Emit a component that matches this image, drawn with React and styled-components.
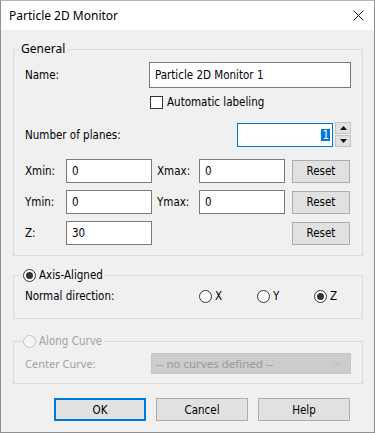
import React from 'react';
import styled, { createGlobalStyle, css } from 'styled-components';

const GlobalStyle = createGlobalStyle`
  html, body {
    margin: 0;
    padding: 0;
    background: #f0f0f0;
  }

  body {
    font-family: 'DejaVu Sans Condensed', 'DejaVu Sans', sans-serif;
    font-stretch: condensed;
    font-size: 11.5px;
    color: #000;
  }
`;

export default function App() {
  return (
    <>
      <GlobalStyle />
      <Window>
        <TitleBar>
          <Title>Particle 2D Monitor</Title>
          <CloseIcon viewBox="0 0 11 11">
            <path d="M0.5 0.5 L10.5 10.5 M10.5 0.5 L0.5 10.5" />
          </CloseIcon>
        </TitleBar>

        <Body>
          <Group>
            <Legend>General</Legend>
            <GroupContent $pad="5px 11px 10px">
              <NameRow>
                <Label>Name:</Label>
                <TextInput $height={26}>Particle 2D Monitor 1</TextInput>
              </NameRow>

              <CheckRow>
                <Checkbox />
                <span>Automatic labeling</span>
              </CheckRow>

              <PlanesRow>
                <Label>Number of planes:</Label>
                <Spin>
                  <SpinInput>
                    <Selected>1</Selected>
                  </SpinInput>
                  <SpinButtons>
                    <SpinButton>
                      <Arrow viewBox="0 0 7 4">
                        <path d="M3.5 0 L7 4 L0 4 Z" />
                      </Arrow>
                    </SpinButton>
                    <SpinButton>
                      <Arrow viewBox="0 0 7 4">
                        <path d="M0 0 L7 0 L3.5 4 Z" />
                      </Arrow>
                    </SpinButton>
                  </SpinButtons>
                </Spin>
              </PlanesRow>

              <Coords>
                <Label>Xmin:</Label>
                <TextInput>0</TextInput>
                <SideLabel>Xmax:</SideLabel>
                <TextInput>0</TextInput>
                <ResetButton>Reset</ResetButton>

                <Label>Ymin:</Label>
                <TextInput>0</TextInput>
                <SideLabel>Ymax:</SideLabel>
                <TextInput>0</TextInput>
                <ResetButton>Reset</ResetButton>

                <Label>Z:</Label>
                <TextInput>30</TextInput>
                <span />
                <span />
                <ResetButton>Reset</ResetButton>
              </Coords>
            </GroupContent>
          </Group>

          <Group $top={11}>
            <RadioLegend>
              <Radio $checked />
              <span>Axis-Aligned</span>
            </RadioLegend>
            <GroupContent $pad="5px 11px 14px">
              <DirectionRow>
                <Label>Normal direction:</Label>
                <RadioOption>
                  <Radio />
                  <span>X</span>
                </RadioOption>
                <RadioOption>
                  <Radio />
                  <span>Y</span>
                </RadioOption>
                <RadioOption>
                  <Radio $checked />
                  <span>Z</span>
                </RadioOption>
              </DirectionRow>
            </GroupContent>
          </Group>

          <Group $top={14}>
            <RadioLegend $disabled>
              <Radio $disabled />
              <span>Along Curve</span>
            </RadioLegend>
            <GroupContent $pad="4px 11px 9px">
              <CurveRow>
                <DisabledLabel>Center Curve:</DisabledLabel>
                <Select>
                  <span>-- no curves defined --</span>
                  <Chevron viewBox="0 0 10 6">
                    <path d="M0.5 0.5 L5 5 L9.5 0.5" />
                  </Chevron>
                </Select>
              </CurveRow>
            </GroupContent>
          </Group>

          <Actions>
            <Button $default>OK</Button>
            <Button>Cancel</Button>
            <Button>Help</Button>
          </Actions>
        </Body>
      </Window>
    </>
  );
}

const Window = styled.div`
  width: 375px;
  height: 433px;
  box-sizing: border-box;
  border: 1px solid #8f8f8f;
  border-top-color: #b5b5b5;
  display: flex;
  flex-direction: column;
  background: #f0f0f0;
`;

const TitleBar = styled.div`
  height: 29px;
  flex: none;
  display: flex;
  align-items: center;
  justify-content: space-between;
  padding: 0 10px 0 8px;
  background: #fff;
`;

const Title = styled.span`
  font-family: 'Noto Sans', sans-serif;
  font-stretch: normal;
  font-size: 12px;
  color: #000;
`;

const CloseIcon = styled.svg`
  width: 11px;
  height: 11px;
  stroke: #111;
  stroke-width: 1;
  fill: none;
`;

const Body = styled.div`
  flex: 1;
  display: flex;
  flex-direction: column;
  padding: 11px 11px 0 12px;
`;

const Group = styled.fieldset`
  margin: ${(p) => p.$top || 0}px 0 0;
  padding: 0;
  min-width: 0;
  border: 1px solid #dcdcdc;
`;

const Legend = styled.legend`
  margin-left: 5px;
  padding: 0 2px;
  line-height: 16px;
  font-family: 'Noto Sans', sans-serif;
  font-stretch: normal;
  font-size: 12px;
`;

const RadioLegend = styled.legend`
  margin-left: 9px;
  padding: 0 2px 0 0;
  height: 16px;
  display: flex;
  align-items: center;
  gap: 3px;
  color: ${(p) => (p.$disabled ? '#a3a3a3' : '#000')};
`;

const GroupContent = styled.div`
  display: flex;
  flex-direction: column;
  padding: ${(p) => p.$pad};
`;

const Label = styled.span`
  white-space: nowrap;
`;

const DisabledLabel = styled.span`
  color: #a3a3a3;
  font-family: 'Noto Sans', sans-serif;
  font-stretch: normal;
  font-size: 11px;
`;

const SideLabel = styled.span`
  padding-left: 5px;
`;

const NameRow = styled.div`
  display: grid;
  grid-template-columns: 124px 1fr;
  align-items: center;
`;

const TextInput = styled.div`
  box-sizing: border-box;
  height: ${(p) => p.$height || 24}px;
  display: flex;
  align-items: center;
  padding: 0 5px;
  background: #fff;
  border: 1px solid #7a7a7a;
  white-space: nowrap;
`;

const CheckRow = styled.label`
  margin: 6px 0 0 125px;
  height: 16px;
  display: flex;
  align-items: center;
  gap: 4px;
`;

const Checkbox = styled.span`
  box-sizing: border-box;
  width: 13px;
  height: 13px;
  border: 1px solid #333;
  background: #fff;
`;

const PlanesRow = styled.div`
  margin-top: 12px;
  display: flex;
  align-items: center;
  justify-content: space-between;
`;

const Spin = styled.div`
  display: flex;
  align-items: center;
  gap: 2px;
`;

const SpinInput = styled.div`
  box-sizing: border-box;
  width: 96px;
  height: 24px;
  display: flex;
  align-items: center;
  justify-content: flex-end;
  padding-right: 2px;
  background: #fff;
  border: 1px solid #0078d7;
`;

const Selected = styled.span`
  padding: 0 1px;
  line-height: 12px;
  background: #0078d7;
  color: #fff;
`;

const SpinButtons = styled.div`
  display: flex;
  flex-direction: column;
  gap: 1px;
`;

const SpinButton = styled.div`
  box-sizing: border-box;
  width: 16px;
  height: 12px;
  display: flex;
  align-items: center;
  justify-content: center;
  background: #e1e1e1;
  border: 1px solid #c4c4c4;
`;

const Arrow = styled.svg`
  width: 7px;
  height: 4px;
  fill: #111;
`;

const Coords = styled.div`
  margin-top: 12px;
  display: grid;
  grid-template-columns: 41px 86px 47px 86px 1fr;
  row-gap: 7px;
  align-items: center;
`;

const buttonFace = css`
  box-sizing: border-box;
  height: 23px;
  display: flex;
  align-items: center;
  justify-content: center;
  background: #e1e1e1;
  border: 1px solid #adadad;
  color: #000;
`;

const ResetButton = styled.div`
  ${buttonFace}
  width: 58px;
  justify-self: end;
  margin-right: 1px;
`;

const DirectionRow = styled.div`
  height: 16px;
  display: grid;
  grid-template-columns: 174px 58px 57px auto;
  align-items: center;
`;

const RadioOption = styled.label`
  display: flex;
  align-items: center;
  gap: 3px;
`;

const Radio = styled.span`
  box-sizing: border-box;
  position: relative;
  width: 13px;
  height: 13px;
  border-radius: 50%;
  border: 1px solid ${(p) => (p.$disabled ? '#c4c4c4' : '#333')};
  background: ${(p) => (p.$disabled ? '#f5f5f5' : '#fff')};

  ${(p) =>
    p.$checked &&
    css`
      &::after {
        content: '';
        position: absolute;
        left: 2px;
        top: 2px;
        width: 7px;
        height: 7px;
        border-radius: 50%;
        background: #333;
      }
    `}
`;

const CurveRow = styled.div`
  display: grid;
  grid-template-columns: 126px 1fr;
  align-items: center;
`;

const Select = styled.div`
  box-sizing: border-box;
  height: 21px;
  display: flex;
  align-items: center;
  justify-content: space-between;
  padding: 0 8px 0 4px;
  background: #cccccc;
  border: 1px solid #c6c6c6;
  color: #9a9a9a;
  font-family: 'Noto Sans', sans-serif;
  font-stretch: normal;
  font-size: 11.5px;
`;

const Chevron = styled.svg`
  width: 9px;
  height: 5px;
  fill: none;
  stroke: #b4b4b4;
  stroke-width: 1;
`;

const Actions = styled.div`
  margin-top: 14px;
  display: flex;
  justify-content: flex-end;
  gap: 10px;
  padding-right: 13px;
`;

const Button = styled.div`
  ${buttonFace}
  width: 92px;

  ${(p) =>
    p.$default &&
    css`
      border-color: #0078d7;
      box-shadow: inset 0 0 0 1px #0078d7;
    `}
`;
